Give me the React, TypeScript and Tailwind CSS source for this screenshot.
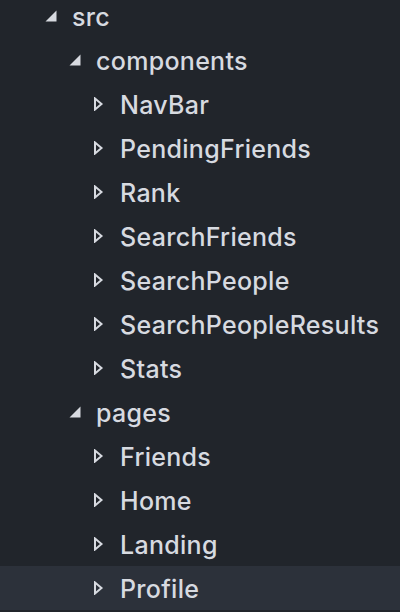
import React from "react";

type Row = { name: string; depth: number; open: boolean; selected?: boolean };

const rows: Row[] = [
  { name: "src", depth: 0, open: true },
  { name: "components", depth: 1, open: true },
  { name: "NavBar", depth: 2, open: false },
  { name: "PendingFriends", depth: 2, open: false },
  { name: "Rank", depth: 2, open: false },
  { name: "SearchFriends", depth: 2, open: false },
  { name: "SearchPeople", depth: 2, open: false },
  { name: "SearchPeopleResults", depth: 2, open: false },
  { name: "Stats", depth: 2, open: false },
  { name: "pages", depth: 1, open: true },
  { name: "Friends", depth: 2, open: false },
  { name: "Home", depth: 2, open: false },
  { name: "Landing", depth: 2, open: false },
  { name: "Profile", depth: 2, open: false, selected: true },
];

const Open = () => (
  <svg width="12" height="12" viewBox="0 0 12 12" className="shrink-0">
    <polygon points="11.5,0.5 11.5,11.5 0.5,11.5" fill="#d7dae0" />
  </svg>
);

const Closed = () => (
  <svg width="12" height="14" viewBox="0 0 12 14" className="shrink-0">
    <polygon points="2,1.5 8.5,7 2,12.5" fill="none" stroke="#d7dae0" strokeWidth="2" strokeLinejoin="miter" />
  </svg>
);

const pad = ["pl-[45px]", "pl-[69px]", "pl-[93px]"];

export default function App() {
  return (
    <div
      className="w-[400px] h-[612px] overflow-hidden bg-[#21252b] text-[#d7dae0]"
      style={{ fontFamily: "Inter, 'Noto Sans', sans-serif" }}
    >
      <div className="-mt-[6px] flex flex-col">
        {rows.map((r) => (
          <div
            key={r.name}
            className={`h-[44px] flex items-center ${pad[r.depth]} ${r.selected ? "bg-[#2c313a]" : ""}`}
          >
            <div className="w-[27px] flex items-center">{r.open ? <Open /> : <Closed />}</div>
            <span className="mt-[2px] text-[25px] font-medium leading-none tracking-[0.3px] whitespace-nowrap">{r.name}</span>
          </div>
        ))}
      </div>
    </div>
  );
}
